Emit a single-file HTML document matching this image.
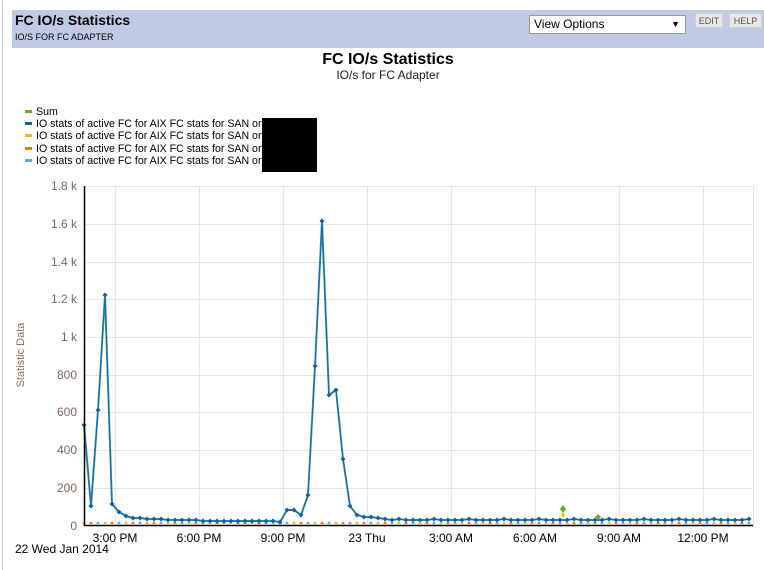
<!DOCTYPE html>
<html><head><meta charset="utf-8"><style>
body{margin:0;width:764px;height:570px;background:#fff;font-family:"Liberation Sans",Arial,sans-serif;position:relative;overflow:hidden}
.lb{position:absolute;left:2px;top:0;width:1px;height:570px;background:#c8c8c8}
.hd{position:absolute;left:12px;top:10px;width:752px;height:38px;background:#bfcbe5}
.t1{position:absolute;left:3px;top:2px;font-size:14px;font-weight:bold;color:#000}
.t2{position:absolute;left:3px;top:22px;font-size:9px;color:#000}
.sel{position:absolute;left:517px;top:5px;background:#fff;border:1px solid #9a9a9a;font-size:12px;line-height:17px;padding-left:4px;box-sizing:border-box;width:157px;height:19px}
.sel span{position:absolute;right:5px;top:0;font-size:9px}
.btn{position:absolute;top:3px;height:15px;background:#e8e8e8;border:1px solid #d0d0d0;font-size:9px;color:#555;line-height:14px;text-align:center;box-sizing:border-box}
.lg{position:absolute;left:25px;font-size:10.6px;color:#000;line-height:12px;white-space:nowrap}
.lg i{display:inline-block;width:7px;height:3px;vertical-align:middle;margin-right:4px;position:relative;top:-1px}
</style></head><body>
<div class="lb"></div>
<div class="hd">
<div class="t1">FC IO/s Statistics</div>
<div class="t2">IO/S FOR FC ADAPTER</div>
<div class="sel">View Options<span>&#9660;</span></div>
<div class="btn" style="left:683px;width:28px">EDIT</div>
<div class="btn" style="left:717px;width:33px">HELP</div>
</div>
<div style="position:absolute;left:0;width:776px;top:51px;text-align:center;font-size:16px;font-weight:bold">FC IO/s Statistics</div>
<div style="position:absolute;left:0;width:776px;top:68px;text-align:center;font-size:12px;color:#222">IO/s for FC Adapter</div>
<div class="lg" style="top:106px"><i style="background:#6aaa2a"></i>Sum</div>
<div class="lg" style="top:118px"><i style="background:#1060b0"></i>IO stats of active FC for AIX FC stats for SAN on</div>
<div class="lg" style="top:130px"><i style="background:#e0c020"></i>IO stats of active FC for AIX FC stats for SAN on</div>
<div class="lg" style="top:143px"><i style="background:#f07a10"></i>IO stats of active FC for AIX FC stats for SAN on</div>
<div class="lg" style="top:155px"><i style="background:#70a0f0"></i>IO stats of active FC for AIX FC stats for SAN on</div>
<div style="position:absolute;left:262px;top:118px;width:55px;height:54px;background:#000"></div>
<svg id="c" width="764" height="570" style="position:absolute;left:0;top:0" font-family="Liberation Sans, Arial, sans-serif">
<g stroke="#e6e6e6" stroke-width="1">
<line x1="84" x2="753" y1="186.5" y2="186.5"/><line x1="84" x2="753" y1="224.5" y2="224.5"/><line x1="84" x2="753" y1="262.5" y2="262.5"/><line x1="84" x2="753" y1="299.5" y2="299.5"/><line x1="84" x2="753" y1="337.5" y2="337.5"/><line x1="84" x2="753" y1="375.5" y2="375.5"/><line x1="84" x2="753" y1="412.5" y2="412.5"/><line x1="84" x2="753" y1="450.5" y2="450.5"/><line x1="84" x2="753" y1="488.5" y2="488.5"/>
<line y1="186" y2="525" x1="115.5" x2="115.5"/><line y1="186" y2="525" x1="199.5" x2="199.5"/><line y1="186" y2="525" x1="283.5" x2="283.5"/><line y1="186" y2="525" x1="367.5" x2="367.5"/><line y1="186" y2="525" x1="451.5" x2="451.5"/><line y1="186" y2="525" x1="535.5" x2="535.5"/><line y1="186" y2="525" x1="619.5" x2="619.5"/><line y1="186" y2="525" x1="703.5" x2="703.5"/><line y1="186" y2="525" x1="753.5" x2="753.5"/>
</g>
<g font-size="12" fill="#7a6a5e" text-anchor="end">
<text x="77" y="190">1.8 k</text><text x="77" y="228">1.6 k</text><text x="77" y="266">1.4 k</text><text x="77" y="303">1.2 k</text><text x="77" y="341">1 k</text><text x="77" y="379">800</text><text x="77" y="416">600</text><text x="77" y="454">400</text><text x="77" y="492">200</text><text x="77" y="530">0</text>
</g>
<text transform="translate(24,355) rotate(-90)" font-size="11" fill="#8a6e5e" text-anchor="middle">Statistic Data</text>
<g font-size="12" fill="#000" text-anchor="middle">
<text x="115" y="542">3:00 PM</text><text x="199" y="542">6:00 PM</text><text x="283" y="542">9:00 PM</text><text x="367" y="542">23 Thu</text><text x="451" y="542">3:00 AM</text><text x="535" y="542">6:00 AM</text><text x="619" y="542">9:00 AM</text><text x="703" y="542">12:00 PM</text>
</g>
<text x="15" y="553" font-size="12" fill="#000">22 Wed Jan 2014</text>
<g id="data"></g>
<line x1="84" x2="753" y1="525.5" y2="525.5" stroke="#000" stroke-width="1.5"/>
<line x1="84.5" x2="84.5" y1="186" y2="526" stroke="#000" stroke-width="1.5"/>
</svg>
<script>
var ys=[425,506,410,295,504,512,516,518,518,519,519,519,520,520,520,520,520,521,521,521,521,521,521,521,521,521,521,521,522,510,510,515,495,366,221,395,390,459,506,515,517,517,518,519];
var n=Math.floor((753-84)/7)+1;
while(ys.length<n){ys.push(520+((ys.length%5==0)?-1:0));}
var pts=[],gp=[];
for(var i=0;i<n;i++){var x=84+7*i;pts.push(x+','+ys[i]);var g=ys[i];
if(x==563)g=509; if(x==598)g=517; gp.push(x+','+g);}
var s='';
s+='<polyline points="'+gp.join(' ')+'" fill="none" stroke="#7ab040" stroke-width="1.5"/>';
s+='<polyline points="'+pts.join(' ')+'" fill="none" stroke="#4a9a98" stroke-width="2"/>';
s+='<polyline points="'+pts.join(' ')+'" fill="none" stroke="#1068b0" stroke-width="1"/>';
var low='';
for(var i=0;i<n;i++){var x=84+7*i;var c=['#e0c020','#f07a10','#70a0f0'][i%3];
low+='<path d="M'+(x-2)+' 524 L'+x+' 521 L'+(x+2)+' 524Z" fill="'+c+'"/>';
s+='<path d="M'+x+' '+(ys[i]-2.5)+'L'+(x+2.5)+' '+ys[i]+'L'+x+' '+(ys[i]+2.5)+'L'+(x-2.5)+' '+ys[i]+'Z" fill="#1060a8"/>';}
s+='<path d="M563 505L566 509L563 513L560 509Z" fill="#6aaa2a"/><path d="M563 512L565 515L563 518L561 515Z" fill="#e0c020"/><path d="M598 514L601 517L598 520L595 517Z" fill="#6aaa2a"/>';
document.getElementById('data').innerHTML=low+s;
</script>
</body></html>
